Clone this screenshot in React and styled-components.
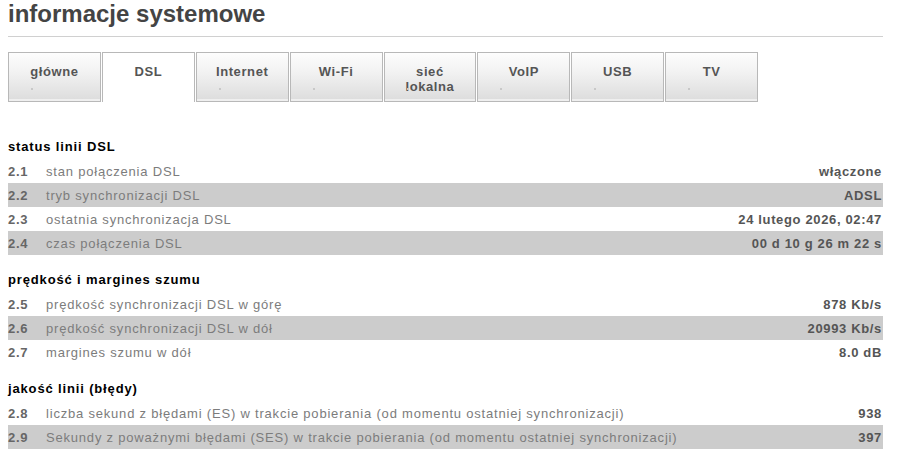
import styled, { createGlobalStyle } from "styled-components";

const GlobalStyle = createGlobalStyle`
      body {
            margin: 0;
            background: #fff;
            font-family: "Liberation Sans", Arial, sans-serif;
      }
`;

const tabs = ["główne", "DSL", "Internet", "Wi-Fi", "sieć\nlokalna", "VoIP", "USB", "TV"];

const sections = [
      {
            title: "status linii DSL",
            rows: [
                  ["2.1", "stan połączenia DSL", "włączone"],
                  ["2.2", "tryb synchronizacji DSL", "ADSL"],
                  ["2.3", "ostatnia synchronizacja DSL", "24 lutego 2026, 02:47"],
                  ["2.4", "czas połączenia DSL", "00 d 10 g 26 m 22 s"],
            ],
      },
      {
            title: "prędkość i margines szumu",
            rows: [
                  ["2.5", "prędkość synchronizacji DSL w górę", "878 Kb/s"],
                  ["2.6", "prędkość synchronizacji DSL w dół", "20993 Kb/s"],
                  ["2.7", "margines szumu w dół", "8.0 dB"],
            ],
      },
      {
            title: "jakość linii (błędy)",
            rows: [
                  ["2.8", "liczba sekund z błędami (ES) w trakcie pobierania (od momentu ostatniej synchronizacji)", "938"],
                  ["2.9", "Sekundy z poważnymi błędami (SES) w trakcie pobierania (od momentu ostatniej synchronizacji)", "397"],
            ],
      },
];

const App = () => {
      return (
            <>
                  <GlobalStyle />
                  <Page>
                        <Title>informacje systemowe</Title>
                        <Rule />
                        <TabBar>
                              {tabs.map((t) => (
                                    <Tab key={t} $active={t === "DSL"}>
                                          {t}
                                    </Tab>
                              ))}
                        </TabBar>
                        {sections.map((s, i) => (
                              <Section key={s.title} $first={i === 0}>
                                    <SectionTitle>{s.title}</SectionTitle>
                                    {s.rows.map(([num, label, value], j) => (
                                          <Row key={num} $shaded={j % 2 === 1}>
                                                <Num>{num}</Num>
                                                <Label>{label}</Label>
                                                <Value>{value}</Value>
                                          </Row>
                                    ))}
                              </Section>
                        ))}
                  </Page>
            </>
      );
};

const Page = styled.div`
      width: 875px;
      margin-left: 8px;
`;

const Title = styled.h1`
      margin: 0;
      font-size: 24px;
      line-height: 27px;
      font-weight: bold;
      color: #444;
`;

const Rule = styled.div`
      height: 1px;
      margin-top: 9px;
      background: #d0d0d0;
`;

const TabBar = styled.div`
      display: flex;
      gap: 1px;
      width: 750px;
      margin-top: 15px;
`;

const Tab = styled.div`
      position: relative;
      flex: 1;
      box-sizing: border-box;
      height: 50px;
      padding-top: 11px;
      border: 1px solid #b8b8b8;
      border-bottom: ${(p) => (p.$active ? "none" : "1px solid #b8b8b8")};
      background: ${(p) => (p.$active ? "#fff" : "linear-gradient(#fdfdfd, #f2f2f2 40%, #dcdcdc)")};
      box-shadow: ${(p) => (p.$active ? "none" : "inset 0 -2px 0 #efefef")};
      font-size: 13px;
      line-height: 15px;
      font-weight: bold;
      letter-spacing: 0.6px;
      color: #555;
      text-align: center;
      white-space: pre-line;

      &::after {
            content: "";
            display: ${(p) => (p.$active ? "none" : "block")};
            position: absolute;
            left: 22px;
            top: 35px;
            width: 2px;
            height: 2px;
            background: #c8c8c8;
      }
`;

const Section = styled.div`
      margin-top: ${(p) => (p.$first ? "33px" : "13px")};
`;

const SectionTitle = styled.div`
      height: 24px;
      line-height: 24px;
      font-size: 13px;
      font-weight: bold;
      letter-spacing: 0.85px;
      color: #000;
`;

const Row = styled.div`
      display: flex;
      align-items: center;
      height: 24px;
      padding-right: 1px;
      background: ${(p) => (p.$shaded ? "#cccccc" : "transparent")};
      font-size: 13px;
      letter-spacing: 0.65px;
`;

const Num = styled.span`
      width: 38px;
      flex: none;
      font-weight: bold;
      color: #666;
`;

const Label = styled.span`
      flex: 1;
      color: #7c7c7c;
      letter-spacing: 0.8px;
      white-space: nowrap;
`;

const Value = styled.span`
      font-weight: bold;
      color: #555;
      white-space: nowrap;
`;

export default App;
